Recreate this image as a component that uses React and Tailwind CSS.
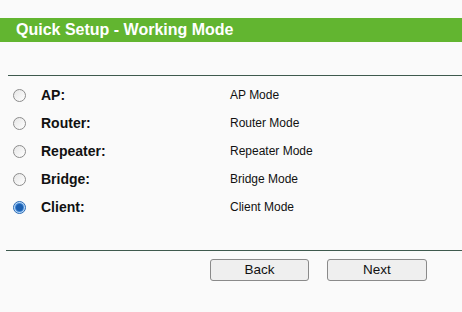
const MODES = [
  { key: "ap", label: "AP:", desc: "AP Mode" },
  { key: "router", label: "Router:", desc: "Router Mode" },
  { key: "repeater", label: "Repeater:", desc: "Repeater Mode" },
  { key: "bridge", label: "Bridge:", desc: "Bridge Mode" },
  { key: "client", label: "Client:", desc: "Client Mode" },
];

function Radio({ checked }) {
  if (checked) {
    return (
      <span className="flex h-[13px] w-[13px] items-center justify-center rounded-full border border-[#2a6bb5] bg-[#bcd9f5]">
        <span className="h-[7px] w-[7px] rounded-full bg-[#1b5fb0] shadow-[0_0_0_1px_#3f86d6]" />
      </span>
    );
  }
  return (
    <span className="block h-[13px] w-[13px] rounded-full border border-[#8c8c8c] bg-gradient-to-br from-[#e6e6e6] to-white" />
  );
}

export default function App() {
  const selected = "client";

  return (
    <div
      className="h-[312px] w-[462px] overflow-hidden bg-[#fafafa] pt-[18px]"
      style={{ fontFamily: '"Liberation Sans", Arial, sans-serif' }}
    >
      <div className="flex h-[24px] items-center bg-[#62b530] pl-[16px] text-[16px] font-bold text-white">
        Quick Setup - Working Mode
      </div>

      <div className="ml-[8px] mt-[33px] h-px bg-[#3e5a4e]" />

      <div className="mt-[5px]">
        {MODES.map((mode) => (
          <div key={mode.key} className="flex h-[28px] items-center">
            <div className="flex w-[41px] justify-center pl-[2px] pr-[4px]">
              <Radio checked={mode.key === selected} />
            </div>
            <div className="w-[189px] text-[14px] font-bold text-[#111]">
              {mode.label}
            </div>
            <div className="text-[12px] text-[#111]">{mode.desc}</div>
          </div>
        ))}
      </div>

      <div className="ml-[6px] mt-[29px] h-px bg-[#3e5a4e]" />

      <div className="mt-[8px] flex gap-[18px] pl-[210px]">
        <button
          type="button"
          className="flex h-[22px] w-[99px] items-center justify-center rounded-[3px] border border-[#8a8a8a] bg-[#efefef] text-[13.5px] text-[#111]"
        >
          Back
        </button>
        <button
          type="button"
          className="flex h-[22px] w-[100px] items-center justify-center rounded-[3px] border border-[#8a8a8a] bg-[#efefef] text-[13.5px] text-[#111]"
        >
          Next
        </button>
      </div>
    </div>
  );
}
